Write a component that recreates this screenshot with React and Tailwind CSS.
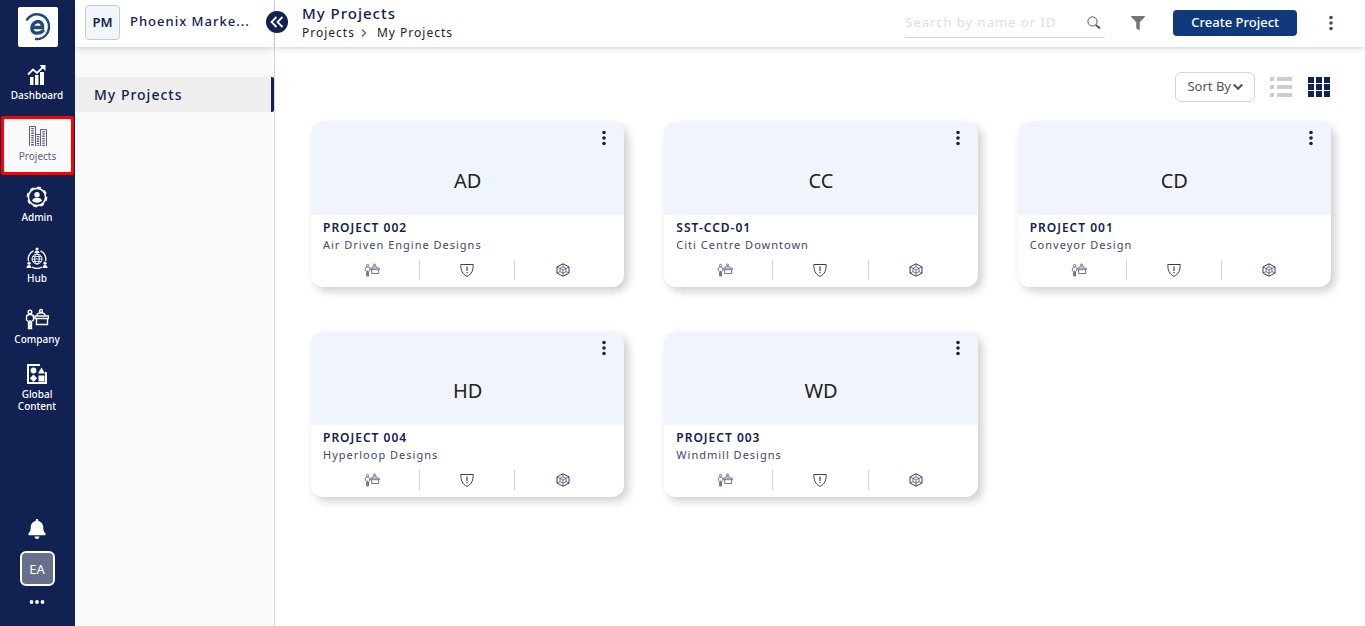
import React from "react";
import { FaBell, FaFilter } from "react-icons/fa";

const projects = [
  { initials: "AD", code: "PROJECT 002", name: "Air Driven Engine Designs" },
  { initials: "CC", code: "SST-CCD-01", name: "Citi Centre Downtown" },
  { initials: "CD", code: "PROJECT 001", name: "Conveyor Design" },
  { initials: "HD", code: "PROJECT 004", name: "Hyperloop Designs" },
  { initials: "WD", code: "PROJECT 003", name: "Windmill Designs" },
];

function LogoIcon() {
  return (
    <svg viewBox="0 0 40 40" className="w-10 h-10" fill="none" stroke="#1f4a78">
      <path d="M9 12.500 C13 7.500 18 6.500 23 8 C32 11 33 22 28 28 C25 31 21 32.500 18 32" strokeWidth="2.400" strokeLinecap="round" />
      <path d="M14 20.500 H24.500 C25 15.500 21 14 18.500 14.800 C12.500 17 12.500 25 17.500 26 C20.500 26.500 23 25.800 25 24" strokeWidth="3.400" strokeLinecap="round" />
    </svg>
  );
}

function DashboardIcon() {
  return (
    <svg viewBox="0 0 20 22" className="w-5 h-[22px]" fill="currentColor">
      <path d="M3 13h3.500v8H3zM8 11h3.500v10H8zM13 8h4v13h-4z" />
      <path d="M1 10.500 L6 5.500 L10 9 L16 3" fill="none" stroke="currentColor" strokeWidth="1.800" />
      <path d="M12.500 1H18.500V7z" />
    </svg>
  );
}

function BuildingsIcon() {
  return (
    <svg viewBox="0 0 20 22" className="w-5 h-[22px]" fill="none" stroke="currentColor">
      <path d="M1.500 21V1.500h6V21M7.500 9.500h5M12.500 21V4.500h6V21M7.500 21v-11.500M12.500 21v-11.500" />
      <path d="M4.500 3v18M10 11v10M15.500 6v15" strokeWidth="2.600" strokeDasharray="1.300 1" />
    </svg>
  );
}

function AdminIcon() {
  return (
    <svg viewBox="0 0 22 22" className="w-[22px] h-[22px]" fill="currentColor">
      <circle cx="11" cy="11" r="8.600" fill="none" stroke="currentColor" strokeWidth="1.600" />
      <circle cx="11" cy="11" r="9.700" fill="none" stroke="currentColor" strokeWidth="1.400" strokeDasharray="3.810 3.810" />
      <circle cx="11" cy="8.800" r="2.700" />
      <path d="M6 14.800c.8-2.400 2.800-3 5-3s4.200.6 5 3c-2.600 2.500-7.400 2.500-10 0z" />
    </svg>
  );
}

function HubIcon() {
  return (
    <svg viewBox="0 0 22 22" className="w-[22px] h-[22px]" fill="none" stroke="currentColor">
      <circle cx="11" cy="12" r="5" />
      <ellipse cx="11" cy="12" rx="2.200" ry="5" />
      <path d="M6 12h10M7 9.500h8M7 14.500h8" strokeWidth=".8" />
      <path d="M7.500 3.800A9 9 0 0 0 2.500 14M14.500 3.800A9 9 0 0 1 19.500 14M6 20a9.500 9.500 0 0 0 10 0" strokeWidth="1.400" />
      <g fill="currentColor" stroke="none">
        <circle cx="11" cy="2" r="1.600" />
        <path d="M8.500 6c0-3 5-3 5 0z" />
        <circle cx="3" cy="16.200" r="1.600" />
        <path d="M.5 21c0-4 5-4 5 0z" />
        <circle cx="19" cy="16.200" r="1.600" />
        <path d="M16.500 21c0-4 5-4 5 0z" />
      </g>
    </svg>
  );
}

function CompanyIcon({ className }) {
  return (
    <svg viewBox="0 0 24 22" className={className} fill="none" stroke="currentColor" strokeWidth="1.400">
      <circle cx="5" cy="4" r="1.800" />
      <path d="M3.500 20.500v-7L1.500 12V9c0-2 1-2.500 3.500-2.500S8.500 7 8.500 9v3l-2 1.500v7zM5 12v8" />
      <circle cx="16" cy="3" r="1.500" />
      <path d="M12 7.500c0-3.500 8-3.500 8 0M10 8h13.500v2.500H10zM11.500 10.500v6h11v-6" />
    </svg>
  );
}

function GlobalIcon() {
  return (
    <svg viewBox="0 0 20 20" className="w-5 h-[22px]" fill="currentColor">
      <path d="M13 1H1v18h18V8" fill="none" stroke="currentColor" strokeWidth="2" />
      <circle cx="6.500" cy="6.500" r="2.900" />
      <path d="M14.500 3.500L18 9.500h-7zM6.500 10.500l3.700 3.700-3.700 3.700-3.700-3.700zM11.500 11.500h6v6h-6z" />
    </svg>
  );
}

function ShieldIcon() {
  return (
    <svg viewBox="0 0 14 14" className="w-3.5 h-3.5" fill="none" stroke="currentColor">
      <path d="M.8 1.500H13.200C13.200 7 12 11 7 13.400 2 11 .8 7 .8 1.500z" />
      <path d="M7 3.500V8M7 9v1.200" strokeWidth="1.200" />
    </svg>
  );
}

function CubeIcon() {
  return (
    <svg viewBox="0 0 14 14" className="w-3.5 h-3.5" fill="none" stroke="currentColor">
      <path d="M7 .8l6 3.100v6.200l-6 3.100-6-3.100V3.900z" />
      <path d="M7 3.800l3 1.600v3.200L7 10.200 4 8.600V5.400zM4 5.400L7 7l3-1.600M7 7v3.200M7 .8v3M1 3.900l3 1.500M13 3.900l-3 1.500M1 10.100l3-1.500M13 10.100l-3-1.500M7 10.200v3" strokeWidth=".7" />
    </svg>
  );
}

function DotsIcon() {
  return (
    <svg viewBox="0 0 4 16" className="w-1 h-4" fill="currentColor">
      <circle cx="2" cy="2.500" r="1.800" />
      <circle cx="2" cy="8" r="1.800" />
      <circle cx="2" cy="13.500" r="1.800" />
    </svg>
  );
}

function NavItem({ icon, label, active, tall }) {
  if (active) {
    return (
      <a
        href="#"
        aria-current="page"
        className="flex flex-col items-center gap-[3px] h-[59px] mb-0.5 ml-px pt-1.5 border-3 border-[#ff0000] rounded-xs bg-[#fafafa] text-[#5a6079]"
      >
        {icon}
        <span>{label}</span>
      </a>
    );
  }
  return (
    <a
      href="#"
      className={`flex flex-col items-center gap-[3px] h-[61px] px-3 text-center text-white font-medium ${tall ? "pt-[3px]" : "pt-[9px]"}`}
    >
      {icon}
      <span>{label}</span>
    </a>
  );
}

function Sidebar() {
  return (
    <nav className="flex flex-col w-[75px] shrink-0 pr-px bg-[#102152] text-[10px] leading-3">
      <a href="#" aria-label="Home" className="ml-[18px] mr-auto mt-[7px] mb-2 rounded-xs bg-white">
        <LogoIcon />
      </a>
      <NavItem icon={<DashboardIcon />} label="Dashboard" />
      <NavItem icon={<BuildingsIcon />} label="Projects" active />
      <NavItem icon={<AdminIcon />} label="Admin" />
      <NavItem icon={<HubIcon />} label="Hub" />
      <NavItem icon={<CompanyIcon className="w-6 h-[22px]" />} label="Company" />
      <NavItem icon={<GlobalIcon />} label="Global Content" tall />
      <div className="mt-auto flex flex-col items-center pb-[22px] text-white">
        <button aria-label="Notifications">
          <FaBell className="w-[18px] h-5" />
        </button>
        <button className="mt-3 mb-3.5 w-[35px] h-[35px] rounded-md border-2 border-white bg-[#666f8c] text-[13px]">
          EA
        </button>
        <button aria-label="More">
          <svg viewBox="0 0 16 4" className="w-4 h-1" fill="currentColor">
            <circle cx="2.500" cy="2" r="1.900" />
            <circle cx="8" cy="2" r="1.900" />
            <circle cx="13.500" cy="2" r="1.900" />
          </svg>
        </button>
      </div>
    </nav>
  );
}

function SidePanel() {
  return (
    <aside className="relative w-[200px] shrink-0 border-r border-gray-300 bg-[#fafafa] text-[#102152] tracking-[1px]">
      <div className="flex items-center gap-2.5 h-[47px] pb-1 pl-2.5 pr-6 bg-white shadow-md">
        <span className="flex items-center justify-center w-[35px] h-[35px] mt-0.5 shrink-0 rounded-sm border border-[#c6cbd3] bg-[#f1f6fd] text-[13px] font-semibold tracking-normal">
          PM
        </span>
        <span className="whitespace-nowrap text-[13px] font-medium">Phoenix Marke...</span>
      </div>
      <a
        href="#"
        className="flex items-center h-[35px] mt-[30px] pl-[19px] border-r-3 border-[#102152] rounded-r-xs bg-[#eeeeee] text-sm font-medium"
      >
        My Projects
      </a>
      {/* Collapse button sits on the panel edge */}
      <button
        aria-label="Collapse panel"
        className="absolute z-20 top-[11px] -right-3.5 w-[22px] h-[22px] flex items-center justify-center rounded-full bg-[#102152] text-white"
      >
        <svg viewBox="0 0 14 12" className="w-3.5 h-3" fill="none" stroke="currentColor" strokeWidth="1.800">
          <path d="M6.500 1l-5 5 5 5M12.500 1l-5 5 5 5" />
        </svg>
      </button>
    </aside>
  );
}

function Header() {
  return (
    <header className="relative z-10 flex items-center h-[47px] pb-0.5 pl-[27px] pr-8 bg-white shadow-md">
      <div className="flex-1">
        <h1 className="text-[15px] leading-5 font-medium text-[#102152] tracking-[1px]">My Projects</h1>
        <div className="flex items-center text-xs leading-5 text-[#222222] tracking-[1px]">
          <a href="#">Projects</a>
          <svg viewBox="0 0 6 8" className="w-1.5 h-2 ml-1.5 mr-2.5 text-gray-500" fill="none" stroke="currentColor" strokeWidth="1.600">
            <path d="M1 .5L4.500 4 1 7.500" />
          </svg>
          <span>My Projects</span>
        </div>
      </div>
      <label className="flex items-center w-[200px] h-7 mt-0.5 border-b border-gray-300">
        <input
          type="text"
          aria-label="Search by name or ID"
          placeholder="Search by name or ID"
          className="flex-1 min-w-0 text-[13px] tracking-[1px] outline-none placeholder:text-[#dddddd]"
        />
        <svg viewBox="0 0 14 14" className="w-3.5 h-3.5 mr-1 text-gray-600" fill="none" stroke="currentColor">
          <circle cx="5.500" cy="5.500" r="4.600" />
          <path d="M9 9l4 3.500" strokeWidth="2" />
        </svg>
      </label>
      <button aria-label="Filter" className="ml-[26px] text-[#757575]">
        <FaFilter className="w-3.5 h-3.5" />
      </button>
      <button className="ml-7 px-[18px] h-[26px] rounded-sm bg-[#10397c] text-[13px] font-medium text-white">
        Create Project
      </button>
      <button aria-label="More options" className="ml-8 text-[#3f4d5c]">
        <DotsIcon />
      </button>
    </header>
  );
}

function Toolbar() {
  return (
    <div className="flex items-center justify-end h-[30px]">
      <button className="flex items-center h-[30px] px-[11px] rounded-md border border-gray-300 text-[13px] text-[#555555]">
        Sort By
        <svg viewBox="0 0 10 8" className="w-2.5 h-2 ml-0.5" fill="none" stroke="currentColor" strokeWidth="2.200">
          <path d="M.8 1.500L5 5.800l4.200-4.300" />
        </svg>
      </button>
      <button aria-label="List view" className="ml-[15px] text-[#cccccc]">
        <svg viewBox="0 0 23 20" className="w-[23px] h-5" fill="currentColor">
          <path d="M0 0h4v4H0zM7 0h15v4H7zM0 8h4v4H0zM7 8h15v4H7zM0 16h4v4H0zM7 16h15v4H7z" />
        </svg>
      </button>
      <button aria-label="Grid view" className="ml-[15px] text-[#102152]">
        <svg viewBox="0 0 23 20" className="w-[23px] h-5" fill="currentColor">
          <path d="M0 0h6v6H0zM8 0h6v6H8zM16 0h6v6h-6zM0 7h6v6H0zM8 7h6v6H8zM16 7h6v6h-6zM0 14h6v6H0zM8 14h6v6H8zM16 14h6v6h-6z" />
        </svg>
      </button>
    </div>
  );
}

function ProjectCard({ project }) {
  return (
    <article className="rounded-xl bg-white shadow-[4px_4px_10px_rgba(0,0,0,0.2)]">
      <div className="relative flex items-center justify-center h-[93px] pt-6 rounded-t-xl bg-[#f0f5fd] text-xl text-[#222222]">
        {project.initials}
        <button aria-label="Project menu" className="absolute top-2 right-[18px]">
          <DotsIcon />
        </button>
      </div>
      <div className="px-3 pt-1 pb-[7px] tracking-[1px]">
        <h2 className="text-xs leading-[18px] font-semibold text-[#102152]">{project.code}</h2>
        <p className="text-[11px] leading-4 text-[#40476a]">{project.name}</p>
        <div className="grid grid-cols-3 mt-[7px] mx-0.5 h-5 divide-x divide-gray-300 text-[#3c3c5c]">
          <button aria-label="Company" className="flex items-center justify-center text-[#66627c]">
            <CompanyIcon className="w-4 h-3.5" />
          </button>
          <button aria-label="Issues" className="flex items-center justify-center">
            <ShieldIcon />
          </button>
          <button aria-label="Models" className="flex items-center justify-center">
            <CubeIcon />
          </button>
        </div>
      </div>
    </article>
  );
}

function App() {
  return (
    <div className="flex min-h-screen bg-white font-['Noto_Sans',sans-serif]">
      <Sidebar />
      <SidePanel />
      <div className="flex-1 min-w-0">
        <Header />
        <main className="pt-[25px] pl-9 pr-[34px]">
          <Toolbar />
          <div className="grid grid-cols-3 gap-x-10 gap-y-[45px] mt-5">
            {projects.map((project) => (
              <ProjectCard key={project.code} project={project} />
            ))}
          </div>
        </main>
      </div>
    </div>
  );
}

export default App;
